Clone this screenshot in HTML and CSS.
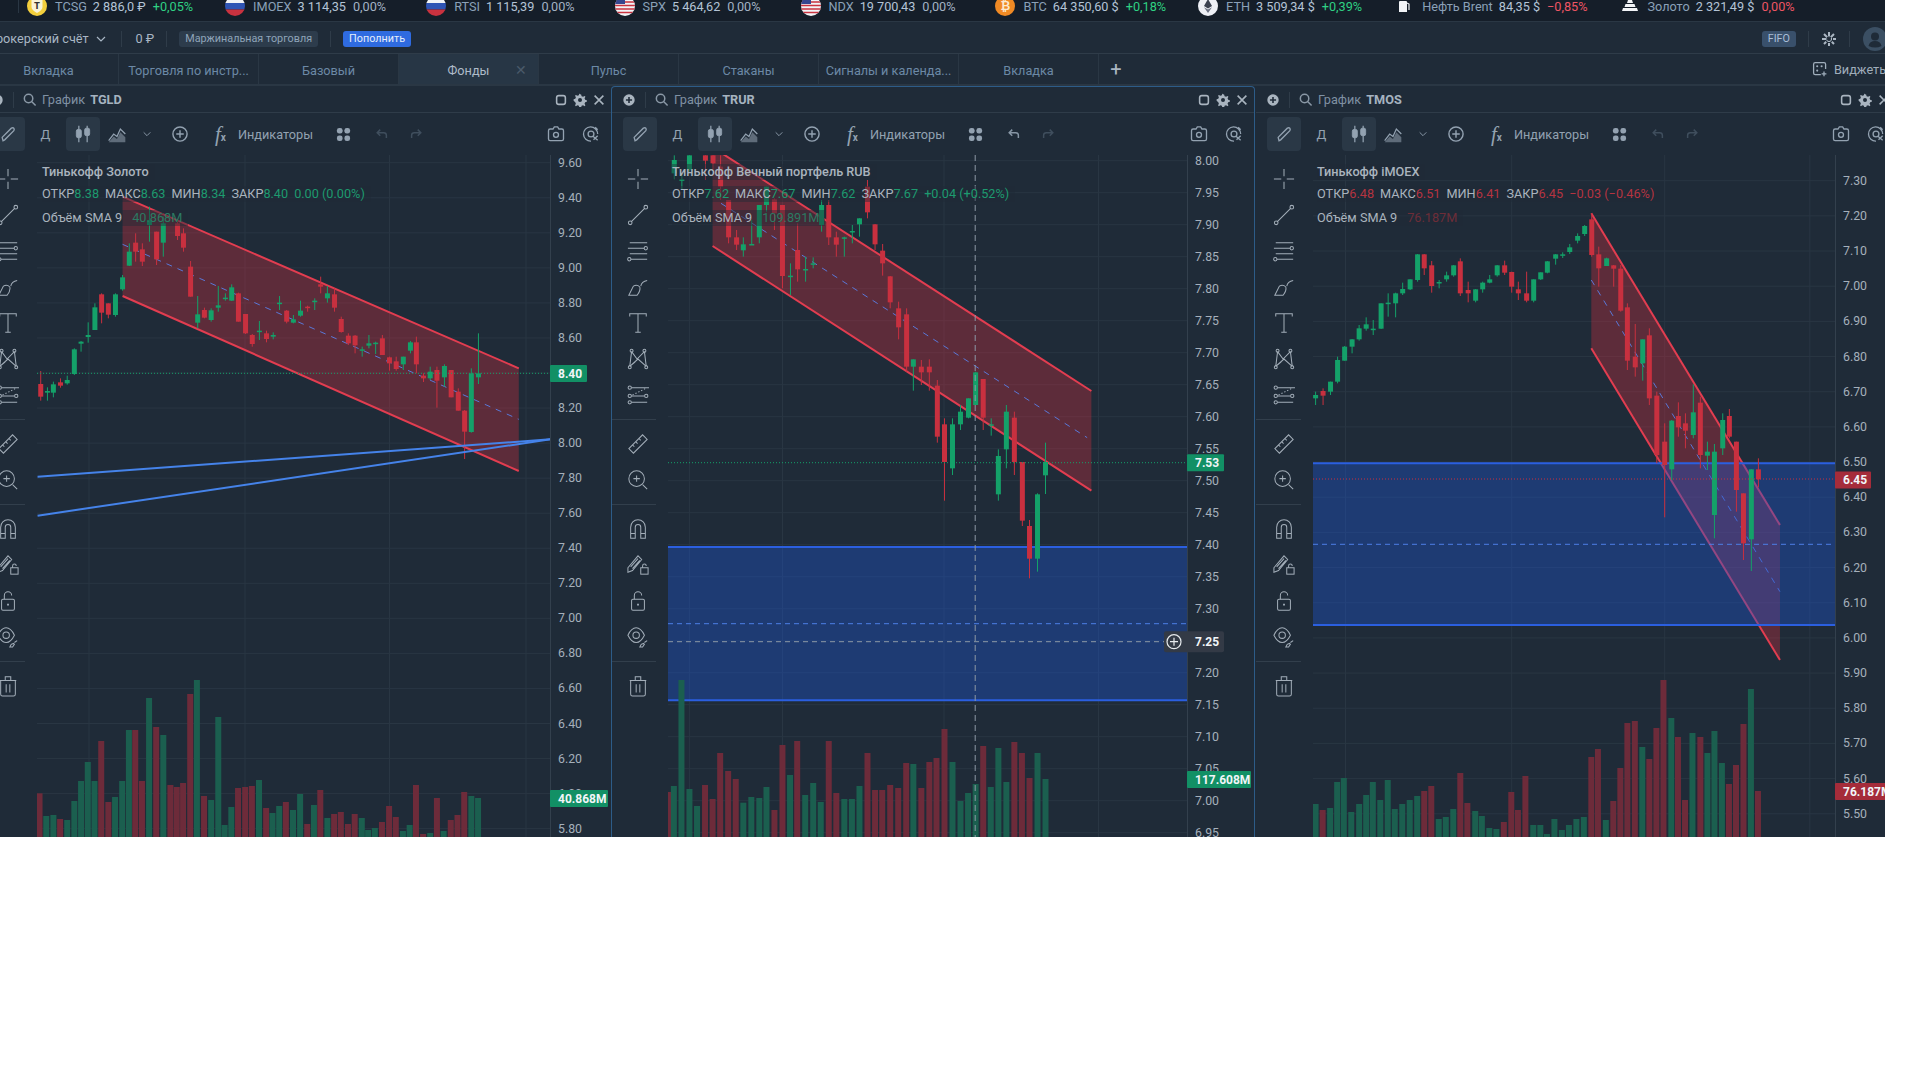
FILE: index.html
```html
<!DOCTYPE html>
<html lang="ru">

<head>
    <meta charset="UTF-8">
    <meta name="viewport" content="width=device-width, initial-scale=1.0">
    <title>Терминал</title>
    <link rel="stylesheet" href="styles.css">
</head>

<body>

    <!-- shared icons -->
    <svg class="icon-defs" xmlns="http://www.w3.org/2000/svg">
        <symbol id="flag-ru" viewBox="0 0 20 20"><rect width="20" height="7" fill="#f2f4f7"/><rect y="7" width="20" height="6.5" fill="#2f55b5"/><rect y="13.5" width="20" height="6.5" fill="#c9323f"/></symbol>
        <symbol id="flag-us" viewBox="0 0 20 20"><rect width="20" height="20" fill="#f2f4f7"/><path d="M0 9.5h20M0 13h20M0 16.500h20M0 6h20M0 2.500h20" stroke="#c9323f" stroke-width="1.7"/><rect width="10" height="8" fill="#35478f"/></symbol>
        <symbol id="logo-shield" viewBox="0 0 20 20"><path d="M4.500 3h11v8q0 3-5.500 6-5.500-3-5.500-6z" fill="#f8f3d8"/></symbol>
        <symbol id="logo-eth" viewBox="0 0 20 20"><rect width="20" height="20" fill="#eef0f6"/><path d="M10 3l4 7-4 2.400-4-2.400z" fill="#3b4150"/><path d="M6 11.200l4 2.400 4-2.400-4 5.800z" fill="#6c7283"/></symbol>
        <symbol id="logo-oil" viewBox="0 0 20 20"><path d="M6 5h6q1 0 1 1v10H5V6q0-1 1-1z" fill="#f2f4f7"/><path d="M13 7l2 1v6" stroke="#f2f4f7" stroke-width="1.200" fill="none"/></symbol>
        <symbol id="logo-gold" viewBox="0 0 20 20"><path d="M8 4h4l1 3H7zM5.500 8h9l1 3h-11zM3 12h14l1 3H2z" fill="#f2f4f7"/></symbol>

        <symbol id="i-plus" viewBox="0 0 16 16"><circle cx="8" cy="8" r="6.500" fill="currentColor"/><path d="M8 4.500v7M4.500 8h7" stroke="#1f2b38" stroke-width="1.800"/></symbol>
        <symbol id="i-search" viewBox="0 0 16 16"><circle cx="7" cy="7" r="4.500"/><path d="M10.500 10.500l4 4"/></symbol>
        <symbol id="i-square" viewBox="0 0 16 16"><rect x="3" y="3" width="10" height="10" rx="2.500" stroke-width="1.800"/></symbol>
        <symbol id="i-gear" viewBox="0 0 16 16"><path d="M8 1.500l1.300.300.500 1.900 1.700.700 1.700-1 1 1-1 1.700.700 1.700 1.900.500v1.800l-1.900.500-.700 1.700 1 1.700-1 1-1.700-1-1.700.700-.500 1.900H7.200l-.500-1.900-1.700-.700-1.700 1-1-1 1-1.700-.700-1.700L.700 8.900V7.100l1.900-.500.700-1.700-1-1.700 1-1 1.700 1 1.700-.700.500-1.900z" fill="currentColor" stroke="none"/><circle cx="8" cy="8" r="2.300" fill="#1f2b38" stroke="none"/></symbol>
        <symbol id="i-close" viewBox="0 0 16 16"><path d="M3 3l10 10M13 3L3 13" stroke-width="1.800"/></symbol>

        <symbol id="t-pencil" viewBox="0 0 24 24"><path d="M6 20l-1-4L16 5q2-1 3 0t0 3L8 19z" stroke-width="1.600"/></symbol>
        <symbol id="t-candles" viewBox="0 0 24 24"><path d="M7 2v20M17 2v20" stroke-width="1.500"/><rect x="4" y="6.500" width="6" height="10" rx="2" fill="currentColor"/><rect x="14" y="5" width="6" height="9" rx="2" fill="currentColor"/></symbol>
        <symbol id="t-area" viewBox="0 0 24 24"><path d="M2 20l6-8 4 3 4-9 6 6" stroke-width="1.500"/><path d="M2 22l6-7 4 3 4-8 6 6v6z" fill="currentColor" opacity=".55" stroke="none"/></symbol>
        <symbol id="t-chev" viewBox="0 0 12 12"><path d="M2 4l4 4 4-4" stroke-width="1.200"/></symbol>
        <symbol id="t-add" viewBox="0 0 24 24"><circle cx="12" cy="12" r="8.500" stroke-width="1.700"/><path d="M12 7.500v9M7.500 12h9" stroke-width="1.700"/></symbol>
        <symbol id="t-grid" viewBox="0 0 16 16"><rect x="1" y="1" width="6" height="6" rx="2.500" fill="currentColor" stroke="none"/><rect x="9" y="1" width="6" height="6" rx="2.500" fill="currentColor" stroke="none"/><rect x="1" y="9" width="6" height="6" rx="2.500" fill="currentColor" stroke="none"/><rect x="9" y="9" width="6" height="6" rx="2.500" fill="currentColor" stroke="none"/></symbol>
        <symbol id="t-undo" viewBox="0 0 16 16"><path d="M6 3L2.500 6.500 6 10M3 6.500h7q3 0 3 3v3" stroke-width="1.700"/></symbol>
        <symbol id="t-redo" viewBox="0 0 16 16"><path d="M10 3l3.500 3.500L10 10M13 6.500H6q-3 0-3 3v3" stroke-width="1.700"/></symbol>
        <symbol id="t-camera" viewBox="0 0 24 24"><path d="M8.500 6l1.500-2.500h4L15.500 6H19q2 0 2 2v10q0 2-2 2H5q-2 0-2-2V8q0-2 2-2z" stroke-width="1.600"/><circle cx="12" cy="13" r="3" stroke-width="1.600"/></symbol>
        <symbol id="t-alert" viewBox="0 0 24 24"><path d="M20 12a8.500 8.500 0 1 0-8 8.500M17 4l3 3" stroke-width="1.600"/><circle cx="12" cy="12" r="3.500" stroke-width="1.600"/><path d="M14 14.500l6 5M20 14l-5 5" stroke-width="1.600"/></symbol>

        <symbol id="d-cross" viewBox="0 0 24 24"><path d="M12 1v8M12 15v8M1 12h8M15 12h8"/></symbol>
        <symbol id="d-line" viewBox="0 0 24 24"><path d="M4.500 19.500l15-15"/><circle cx="20.500" cy="3.500" r="2"/><circle cx="3.500" cy="20.500" r="2"/></symbol>
        <symbol id="d-fib" viewBox="0 0 24 24"><path d="M3 3h19M1 9h18M3 15h19M4 21h18"/><circle cx="20.500" cy="9" r="1.800" fill="#1f2b38"/><circle cx="2.500" cy="21" r="1.800" fill="#1f2b38"/></symbol>
        <symbol id="d-brush" viewBox="0 0 24 24"><path d="M2 21l5-10q4-2 7 1 1 4-3 9zM15 11q1-5 7-6"/></symbol>
        <symbol id="d-text" viewBox="0 0 24 24"><path d="M3 5V2h18v3M12 2v20M9 22h6"/></symbol>
        <symbol id="d-pattern" viewBox="0 0 24 24"><path d="M5 4L3 20M5 4l6 8 8-8M19 4l2 16M3 20l9-8 9 8M3 20l6-5"/><circle cx="5" cy="3" r="1.600"/><circle cx="19" cy="3" r="1.600"/><circle cx="3" cy="21" r="1.600"/><circle cx="21" cy="21" r="1.600"/></symbol>
        <symbol id="d-forecast" viewBox="0 0 24 24"><path d="M5 4h19M5 20h17M5 13h14" /><path d="M6 12l14-7" stroke-dasharray="1.500 2"/><circle cx="3" cy="4" r="1.800"/><circle cx="3" cy="20" r="1.800"/><circle cx="21" cy="13" r="1.800"/><circle cx="3" cy="13" r="1.800"/></symbol>
        <symbol id="d-ruler" viewBox="0 0 24 24"><path d="M2 17L17 2l5 5L7 22zM6 13l2 2M9.500 9.500l2 2M13 6l2 2"/></symbol>
        <symbol id="d-zoom" viewBox="0 0 24 24"><circle cx="10.500" cy="10.500" r="8.500"/><path d="M10.500 7v7M7 10.500h7M17 17l5 5"/></symbol>
        <symbol id="d-magnet" viewBox="0 0 24 24"><path d="M4 22V10a8 8 0 0 1 16 0v12h-5V10a3 3 0 0 0-6 0v12zM4 17h5M15 17h5"/></symbol>
        <symbol id="d-lockpen" viewBox="0 0 24 24"><path d="M1 15L12 2l4 4L6 18l-5 2zM4 14l8-9M6 16l8-9"/><rect x="15" y="15" width="8" height="7"/><path d="M17 15v-2a2 2 0 0 1 4 0"/></symbol>
        <symbol id="d-lock" viewBox="0 0 24 24"><rect x="5" y="10" width="14" height="12" rx="1.500"/><path d="M8 10V6a4 4 0 0 1 8 0"/><path d="M12 15v2" stroke-width="2"/></symbol>
        <symbol id="d-eye" viewBox="0 0 24 24"><path d="M1 10q4-8 9-8t9 8q-4 8-9 8T1 10z"/><circle cx="10" cy="10" r="3.500"/><path d="M14 23l1.500-3 2.500-1 1 1-2 3zM19 18l3-2"/></symbol>
        <symbol id="d-trash" viewBox="0 0 24 24"><path d="M4 6h16v15q0 2-2 2H6q-2 0-2-2zM9 6V2h6v4M10 10v9M14 10v9M3 6h18"/></symbol>

        <symbol id="i-widgets" viewBox="0 0 20 20"><path d="M11 17H4q-2 0-2-2V4q0-2 2-2h11q2 0 2 2v6M15 13v6M12 16h6" stroke-width="1.600"/><circle cx="6.500" cy="6.500" r="1.300" fill="currentColor" stroke="none"/><circle cx="12" cy="6.500" r="1.300" fill="currentColor" stroke="none"/><circle cx="6.500" cy="12" r="1.300" fill="currentColor" stroke="none"/></symbol>
        <symbol id="i-snow" viewBox="0 0 16 16"><path d="M8 1v14M1 8h14M3 3l10 10M13 3L3 13" stroke-width="2" stroke-dasharray="4.500 1"/><circle cx="8" cy="8" r="2" fill="#1f2b38" stroke="none"/></symbol>
        <symbol id="i-user" viewBox="0 0 24 24"><circle cx="12" cy="12" r="12" fill="#3b4f63"/><circle cx="12" cy="9.500" r="4" fill="#1f2b38"/><path d="M5.500 19q1-5 6.500-5t6.500 5q-6 3-13 0z" fill="#1f2b38"/></symbol>
    </svg>

    <div class="app">

        <div class="ticker">
            <span class="ticker-dash"></span>
            <div class="tick"><span class="tick-logo logo-tcsg"><svg class="shield"><use href="#logo-shield"/></svg><b>T</b></span><span class="tick-name">TCSG</span><span class="tick-val">2 886,0 ₽</span><span class="tick-up">+0,05%</span></div>
            <div class="tick"><svg class="tick-icon"><use href="#flag-ru"/></svg><span class="tick-name">IMOEX</span><span class="tick-val">3 114,35</span><span class="tick-flat">0,00%</span></div>
            <div class="tick"><svg class="tick-icon"><use href="#flag-ru"/></svg><span class="tick-name">RTSI</span><span class="tick-val">1 115,39</span><span class="tick-flat">0,00%</span></div>
            <div class="tick"><svg class="tick-icon"><use href="#flag-us"/></svg><span class="tick-name">SPX</span><span class="tick-val">5 464,62</span><span class="tick-flat">0,00%</span></div>
            <div class="tick"><svg class="tick-icon"><use href="#flag-us"/></svg><span class="tick-name">NDX</span><span class="tick-val">19 700,43</span><span class="tick-flat">0,00%</span></div>
            <div class="tick"><span class="tick-logo logo-btc"><b>₿</b></span><span class="tick-name">BTC</span><span class="tick-val">64 350,60 $</span><span class="tick-up">+0,18%</span></div>
            <div class="tick"><svg class="tick-icon"><use href="#logo-eth"/></svg><span class="tick-name">ETH</span><span class="tick-val">3 509,34 $</span><span class="tick-up">+0,39%</span></div>
            <div class="tick"><svg class="tick-icon"><use href="#logo-oil"/></svg><span class="tick-name">Нефть Brent</span><span class="tick-val">84,35 $</span><span class="tick-down">−0,85%</span></div>
            <div class="tick"><svg class="tick-icon"><use href="#logo-gold"/></svg><span class="tick-name">Золото</span><span class="tick-val">2 321,49 $</span><span class="tick-down">0,00%</span></div>
        </div>

        <div class="account-bar">
            <span class="account-name">Брокерский счёт</span>
            <svg class="chev"><use href="#t-chev"/></svg>
            <span class="bar-sep"></span>
            <span class="account-sum">0 ₽</span>
            <span class="bar-sep"></span>
            <span class="chip">Маржинальная торговля</span>
            <span class="bar-sep"></span>
            <span class="chip chip-blue">Пополнить</span>
            <span class="chip chip-fifo">FIFO</span>
            <span class="bar-sep"></span>
            <svg class="snow-icon"><use href="#i-snow"/></svg>
            <span class="bar-sep"></span>
            <svg class="user-icon"><use href="#i-user"/></svg>
        </div>

        <div class="tabs">
            <div class="tab">Вкладка</div>
            <div class="tab">Торговля по инстр...</div>
            <div class="tab">Базовый</div>
            <div class="tab tab-active">Фонды<span class="tab-close">✕</span></div>
            <div class="tab">Пульс</div>
            <div class="tab">Стаканы</div>
            <div class="tab">Сигналы и календа...</div>
            <div class="tab">Вкладка</div>
            <div class="tab-add">+</div>
            <div class="widgets"><svg class="widgets-icon"><use href="#i-widgets"/></svg>Виджеты</div>
        </div>

        <div class="panels">

            <section class="panel panel-first">
                <div class="panel-head">
                    <svg class="head-plus"><use href="#i-plus"/></svg>
                    <span class="head-sep"></span>
                    <svg class="head-search"><use href="#i-search"/></svg>
                    <span class="head-label">График</span>
                    <span class="head-ticker">TGLD</span>
                    <svg class="head-btn head-btn-first"><use href="#i-square"/></svg>
                    <svg class="head-btn"><use href="#i-gear"/></svg>
                    <svg class="head-btn"><use href="#i-close"/></svg>
                </div>
                <div class="toolbar">
                    <span class="tool-chip"><svg class="bar-icon"><use href="#t-pencil"/></svg></span>
                    <span class="period">Д</span>
                    <span class="tool-chip candle-chip"><svg class="bar-icon"><use href="#t-candles"/></svg></span>
                    <svg class="bar-icon area-icon"><use href="#t-area"/></svg>
                    <svg class="chev-small"><use href="#t-chev"/></svg>
                    <svg class="bar-icon add-icon"><use href="#t-add"/></svg>
                    <span class="fx">f<small>x</small></span>
                    <span class="indicators">Индикаторы</span>
                    <svg class="grid-icon"><use href="#t-grid"/></svg>
                    <svg class="hist-icon hist-off"><use href="#t-undo"/></svg>
                    <svg class="hist-icon hist-off redo-icon"><use href="#t-redo"/></svg>
                    <svg class="bar-icon camera-icon"><use href="#t-camera"/></svg>
                    <svg class="bar-icon alert-icon"><use href="#t-alert"/></svg>
                </div>
                <div class="panel-body">
                    <div class="tools">
                        <svg class="tool"><use href="#d-cross"/></svg>
                        <svg class="tool"><use href="#d-line"/></svg>
                        <svg class="tool"><use href="#d-fib"/></svg>
                        <svg class="tool"><use href="#d-brush"/></svg>
                        <svg class="tool"><use href="#d-text"/></svg>
                        <svg class="tool"><use href="#d-pattern"/></svg>
                        <svg class="tool"><use href="#d-forecast"/></svg>
                        <span class="tool-sep"></span>
                        <svg class="tool"><use href="#d-ruler"/></svg>
                        <svg class="tool"><use href="#d-zoom"/></svg>
                        <span class="tool-sep"></span>
                        <svg class="tool"><use href="#d-magnet"/></svg>
                        <svg class="tool"><use href="#d-lockpen"/></svg>
                        <svg class="tool"><use href="#d-lock"/></svg>
                        <svg class="tool"><use href="#d-eye"/></svg>
                        <span class="tool-sep"></span>
                        <svg class="tool"><use href="#d-trash"/></svg>
                    </div>
                    <div class="chart" id="chart-tgld">
                        <div class="legend">
                            <div class="legend-title"><span>Тинькофф Золото</span></div>
                            <div class="legend-ohlc is-up"><span>ОТКР<b>8.38</b></span><span>МАКС<b>8.63</b></span><span>МИН<b>8.34</b></span><span>ЗАКР<b>8.40</b></span><span><b>0.00 (0.00%)</b></span></div>
                            <div class="legend-vol is-up"><span>Объём SMA 9<b>40.868M</b></span></div>
                        </div>
                    </div>
                </div>
            </section>

            <section class="panel panel-active">
                <div class="panel-head">
                    <svg class="head-plus"><use href="#i-plus"/></svg>
                    <span class="head-sep"></span>
                    <svg class="head-search"><use href="#i-search"/></svg>
                    <span class="head-label">График</span>
                    <span class="head-ticker">TRUR</span>
                    <svg class="head-btn head-btn-first"><use href="#i-square"/></svg>
                    <svg class="head-btn"><use href="#i-gear"/></svg>
                    <svg class="head-btn"><use href="#i-close"/></svg>
                </div>
                <div class="toolbar">
                    <span class="tool-chip"><svg class="bar-icon"><use href="#t-pencil"/></svg></span>
                    <span class="period">Д</span>
                    <span class="tool-chip candle-chip"><svg class="bar-icon"><use href="#t-candles"/></svg></span>
                    <svg class="bar-icon area-icon"><use href="#t-area"/></svg>
                    <svg class="chev-small"><use href="#t-chev"/></svg>
                    <svg class="bar-icon add-icon"><use href="#t-add"/></svg>
                    <span class="fx">f<small>x</small></span>
                    <span class="indicators">Индикаторы</span>
                    <svg class="grid-icon"><use href="#t-grid"/></svg>
                    <svg class="hist-icon"><use href="#t-undo"/></svg>
                    <svg class="hist-icon hist-off redo-icon"><use href="#t-redo"/></svg>
                    <svg class="bar-icon camera-icon"><use href="#t-camera"/></svg>
                    <svg class="bar-icon alert-icon"><use href="#t-alert"/></svg>
                </div>
                <div class="panel-body">
                    <div class="tools">
                        <svg class="tool"><use href="#d-cross"/></svg>
                        <svg class="tool"><use href="#d-line"/></svg>
                        <svg class="tool"><use href="#d-fib"/></svg>
                        <svg class="tool"><use href="#d-brush"/></svg>
                        <svg class="tool"><use href="#d-text"/></svg>
                        <svg class="tool"><use href="#d-pattern"/></svg>
                        <svg class="tool"><use href="#d-forecast"/></svg>
                        <span class="tool-sep"></span>
                        <svg class="tool"><use href="#d-ruler"/></svg>
                        <svg class="tool"><use href="#d-zoom"/></svg>
                        <span class="tool-sep"></span>
                        <svg class="tool"><use href="#d-magnet"/></svg>
                        <svg class="tool"><use href="#d-lockpen"/></svg>
                        <svg class="tool"><use href="#d-lock"/></svg>
                        <svg class="tool"><use href="#d-eye"/></svg>
                        <span class="tool-sep"></span>
                        <svg class="tool"><use href="#d-trash"/></svg>
                    </div>
                    <div class="chart" id="chart-trur">
                        <div class="legend">
                            <div class="legend-title"><span>Тинькофф Вечный портфель RUB</span></div>
                            <div class="legend-ohlc is-up"><span>ОТКР<b>7.62</b></span><span>МАКС<b>7.67</b></span><span>МИН<b>7.62</b></span><span>ЗАКР<b>7.67</b></span><span><b>+0.04 (+0.52%)</b></span></div>
                            <div class="legend-vol is-up"><span>Объём SMA 9<b>109.891M</b></span></div>
                        </div>
                    </div>
                </div>
            </section>

            <section class="panel panel-last">
                <div class="panel-head">
                    <svg class="head-plus"><use href="#i-plus"/></svg>
                    <span class="head-sep"></span>
                    <svg class="head-search"><use href="#i-search"/></svg>
                    <span class="head-label">График</span>
                    <span class="head-ticker">TMOS</span>
                    <svg class="head-btn head-btn-first"><use href="#i-square"/></svg>
                    <svg class="head-btn"><use href="#i-gear"/></svg>
                    <svg class="head-btn"><use href="#i-close"/></svg>
                </div>
                <div class="toolbar">
                    <span class="tool-chip"><svg class="bar-icon"><use href="#t-pencil"/></svg></span>
                    <span class="period">Д</span>
                    <span class="tool-chip candle-chip"><svg class="bar-icon"><use href="#t-candles"/></svg></span>
                    <svg class="bar-icon area-icon"><use href="#t-area"/></svg>
                    <svg class="chev-small"><use href="#t-chev"/></svg>
                    <svg class="bar-icon add-icon"><use href="#t-add"/></svg>
                    <span class="fx">f<small>x</small></span>
                    <span class="indicators">Индикаторы</span>
                    <svg class="grid-icon"><use href="#t-grid"/></svg>
                    <svg class="hist-icon hist-off"><use href="#t-undo"/></svg>
                    <svg class="hist-icon hist-off redo-icon"><use href="#t-redo"/></svg>
                    <svg class="bar-icon camera-icon"><use href="#t-camera"/></svg>
                    <svg class="bar-icon alert-icon"><use href="#t-alert"/></svg>
                </div>
                <div class="panel-body">
                    <div class="tools">
                        <svg class="tool"><use href="#d-cross"/></svg>
                        <svg class="tool"><use href="#d-line"/></svg>
                        <svg class="tool"><use href="#d-fib"/></svg>
                        <svg class="tool"><use href="#d-brush"/></svg>
                        <svg class="tool"><use href="#d-text"/></svg>
                        <svg class="tool"><use href="#d-pattern"/></svg>
                        <svg class="tool"><use href="#d-forecast"/></svg>
                        <span class="tool-sep"></span>
                        <svg class="tool"><use href="#d-ruler"/></svg>
                        <svg class="tool"><use href="#d-zoom"/></svg>
                        <span class="tool-sep"></span>
                        <svg class="tool"><use href="#d-magnet"/></svg>
                        <svg class="tool"><use href="#d-lockpen"/></svg>
                        <svg class="tool"><use href="#d-lock"/></svg>
                        <svg class="tool"><use href="#d-eye"/></svg>
                        <span class="tool-sep"></span>
                        <svg class="tool"><use href="#d-trash"/></svg>
                    </div>
                    <div class="chart" id="chart-tmos">
                        <div class="legend">
                            <div class="legend-title"><span>Тинькофф iMOEX</span></div>
                            <div class="legend-ohlc is-down"><span>ОТКР<b>6.48</b></span><span>МАКС<b>6.51</b></span><span>МИН<b>6.41</b></span><span>ЗАКР<b>6.45</b></span><span><b>−0.03 (−0.46%)</b></span></div>
                            <div class="legend-vol is-down"><span>Объём SMA 9<b>76.187M</b></span></div>
                        </div>
                    </div>
                </div>
            </section>

        </div>
    </div>

    <script src="charts.js"></script>

</body>

</html>
```

FILE: styles.css
```css
body {
    margin: 0;
    background-color: #fff;
    font-family: Roboto, "Noto Sans", sans-serif;
    font-size: 12.7px;
}

svg {
    display: block;
    flex-shrink: 0;
}

.icon-defs {
    position: absolute;
    width: 0;
    height: 0;
}

.app {
    width: 1885px;
    height: 837px;
    overflow: hidden;
    background-color: #1f2b38;
    color: #a9b4bf;
}

/* ticker line */
.ticker {
    display: flex;
    align-items: center;
    gap: 32px;
    height: 22px;
    padding-bottom: 9px;
    box-sizing: border-box;
    background-color: #151e29;
    border-bottom: 1px solid #2a3744;
    white-space: nowrap;
}

.ticker-dash {
    width: 19px;
    height: 13px;
    margin-right: -24px;
    border-right: 1px solid #2a3744;
    box-sizing: border-box;
}

.tick {
    display: flex;
    align-items: center;
}

.tick-icon,
.tick-logo {
    width: 20px;
    height: 20px;
    margin-right: 8px;
    border-radius: 50%;
}

.tick-logo {
    position: relative;
    flex-shrink: 0;
    display: flex;
    align-items: center;
    justify-content: center;
    overflow: hidden;
    font-family: "DejaVu Sans", sans-serif;
}

.logo-tcsg {
    background-color: #f3cf3d;
    color: #333;
    font-size: 8px;
}

.logo-tcsg b {
    position: relative;
}

.shield {
    position: absolute;
    top: 0;
    left: 0;
    width: 20px;
    height: 20px;
}

.logo-btc {
    background-color: #f08a24;
    color: #fbe9cf;
    font-size: 12px;
}

.tick-name {
    margin-right: 6px;
    color: #8ba1b8;
}

.tick-val {
    margin-right: 7px;
    color: #b4c4d6;
}

.tick-flat {
    margin-right: 8px;
    color: #a3b3c4;
}

.tick-up {
    color: #2fd183;
}

.tick-down {
    color: #ee5564;
}

/* account line */
.account-bar {
    display: flex;
    align-items: center;
    height: 32px;
    padding-top: 2px;
    border-bottom: 1px solid #2f3c49;
    box-sizing: border-box;
    white-space: nowrap;
}

.account-name {
    margin-left: -12px;
    color: #a8b6c4;
}

.chev {
    width: 12px;
    height: 12px;
    margin: 0 14px 0 6px;
    fill: none;
    stroke: #a8b6c4;
}

.bar-sep {
    width: 1px;
    height: 16px;
    background-color: #2f3c49;
}

.account-sum {
    margin: 0 12px 0 14px;
    color: #a8b6c4;
}

.chip {
    margin: 0 12px;
    padding: 0 6px;
    height: 16px;
    line-height: 16px;
    border-radius: 3px;
    background-color: #2d3c4c;
    color: #8fa4b9;
    font-size: 10.800px;
}

.chip-blue {
    background-color: #2f6be0;
    color: #e6eefb;
}

.chip-fifo {
    margin-left: auto;
    background-color: #39506b;
    color: #a9bed6;
}

.snow-icon {
    width: 16px;
    height: 16px;
    margin: 0 12px;
    fill: none;
    stroke: #aab6c2;
}

.user-icon {
    width: 24px;
    height: 24px;
    margin: 0 -2px 0 13px;
}

/* tabs */
.tabs {
    display: flex;
    align-items: stretch;
    height: 32px;
    margin-left: -21px;
    border-bottom: 2px solid #2a3744;
    box-sizing: border-box;
}

.tab {
    position: relative;
    width: 140px;
    flex-shrink: 0;
    box-sizing: border-box;
    border-right: 1px solid #2a3744;
    line-height: 33px;
    text-align: center;
    color: #6c89a6;
}

.tab-active {
    background-color: #273645;
    color: #aebbc8;
}

.tab-close {
    position: absolute;
    top: 0;
    right: 11px;
    font-size: 14px;
    color: #4a5a6a;
}

.tab-add {
    width: 34px;
    line-height: 30px;
    font-size: 20px;
    text-align: center;
    color: #aab6c2;
}

.widgets {
    display: flex;
    align-items: center;
    gap: 6px;
    margin-left: auto;
    transform: translateX(4px);
    color: #a0aebc;
    white-space: nowrap;
}

.widgets-icon {
    width: 16px;
    height: 16px;
    fill: none;
    stroke: #a0aebc;
}

/* chart panels */
.panels {
    display: flex;
    margin-left: -20px;
    height: 751px;
}

.panel {
    flex-shrink: 0;
    box-sizing: border-box;
    display: flex;
    flex-direction: column;
    padding-top: 1px;
}

.panel-first {
    width: 631px;
}

.panel-active {
    width: 644px;
    border: 1px solid #2d5c88;
    border-bottom: none;
    border-radius: 4px 4px 0 0;
    padding-top: 0;
}

.panel-last {
    width: 640px;
    margin-left: 1px;
}

.panel-head {
    display: flex;
    align-items: center;
    flex-shrink: 0;
    height: 25px;
    border-bottom: 1px solid #2f3c49;
    padding: 0 0 0 10px;
    color: #a9b4bf;
}

.head-plus {
    width: 14px;
    height: 14px;
    color: #a9b4bf;
}

.head-sep {
    width: 1px;
    height: 16px;
    margin: 0 8px 0 9px;
    background-color: #2f3c49;
}

.head-search {
    width: 15px;
    height: 15px;
    fill: none;
    stroke: #8a98a6;
    stroke-width: 1.6;
}

.head-label {
    margin: 0 5px 0 5px;
    color: #7f91a3;
}

.head-ticker {
    font-weight: 700;
    color: #a6b3c0;
}

.head-btn {
    width: 14px;
    height: 14px;
    margin-right: 5px;
    fill: none;
    stroke: #a9b4bf;
    color: #a9b4bf;
}

.head-btn-first {
    margin-left: auto;
}

.toolbar {
    display: flex;
    align-items: center;
    flex-shrink: 0;
    height: 42px;
    padding: 0 10px 0 11px;
    color: #93a2b1;
}

.tool-chip {
    display: flex;
    align-items: center;
    justify-content: center;
    width: 34px;
    height: 34px;
    border-radius: 4px;
    background-color: #2a3846;
}

.bar-icon {
    width: 20px;
    height: 20px;
    fill: none;
    stroke: #93a2b1;
    color: #93a2b1;
}

.period {
    width: 41px;
    font-size: 13px;
    text-align: center;
}

.area-icon {
    margin-left: 7px;
}

.chev-small {
    width: 10px;
    height: 10px;
    margin-left: 15px;
    fill: none;
    stroke: #8695a4;
}

.add-icon {
    margin-left: 18px;
}

.fx {
    margin-left: 25px;
    width: 23px;
    font-family: "Liberation Serif", serif;
    font-size: 21px;
    font-style: italic;
    color: #93a2b1;
}

.fx small {
    font-family: Roboto, sans-serif;
    font-size: 10px;
    font-style: normal;
    font-weight: 700;
}

.indicators {
    width: 73px;
    color: #93a2b1;
    white-space: nowrap;
}

.grid-icon {
    width: 15px;
    height: 15px;
    margin-left: 25px;
    color: #93a2b1;
}

.hist-icon {
    width: 14px;
    height: 14px;
    margin-left: 24px;
    fill: none;
    stroke: #8796a5;
}

.hist-off {
    stroke: #3f4e5d;
}

.redo-icon {
    margin-left: 20px;
}

.camera-icon {
    margin-left: auto;
}

.alert-icon {
    margin-left: 15px;
}

.panel-body {
    display: flex;
    flex: 1;
    min-height: 0;
}

.tools {
    flex-shrink: 0;
    width: 57px;
    box-sizing: border-box;
    padding-top: 6px;
}

.panel-active .tools {
    width: 56px;
}

.tool {
    width: 22px;
    height: 22px;
    padding: 7px 0;
    margin-left: 17px;
    fill: none;
    stroke: #a3aeb9;
    stroke-width: 1.1;
}

.panel-active .tool {
    margin-left: 15px;
}

.tool-sep {
    display: block;
    height: 1px;
    margin: 6px 12px 6px 0;
    background-color: #323f4c;
}

.chart {
    position: relative;
    flex: 1;
    overflow: hidden;
}

.chart-svg {
    position: absolute;
    top: 0;
    left: 0;
}

.axis-text {
    font-size: 12.300px;
    fill: #a5b0bb;
}

.tag-text {
    font-size: 12px;
    font-weight: 700;
    fill: #f1f5f8;
}

/* legend sits over the plot */
.legend {
    position: absolute;
    top: 6px;
    left: 5px;
    z-index: 2;
    color: #aab4be;
}

.panel-active .legend,
.panel-last .legend {
    left: 4px;
}

.legend > div {
    display: flex;
    height: 22px;
    align-items: center;
}

.legend > div > span {
    background-color: rgba(31, 43, 56, 0.45);
    padding-right: 6px;
    line-height: 16px;
    white-space: nowrap;
}

.legend-title {
    font-weight: 500;
}

.legend b {
    font-weight: 400;
}

.is-up b {
    color: #1d9a6f;
}

.is-down b {
    color: #b53441;
}

.legend-vol {
    margin-top: 2px;
}

.legend-vol b {
    margin-left: 10px;
}

.legend-vol.is-up b {
    color: #2c7a62;
}

.legend-vol.is-down b {
    color: #6d2d38;
}
```

FILE: charts.js
```js
// Chart data was read off the pictures of each panel, so x and y are in "trace" units:
// pageX = ox + x / sx, pageY = oy + y / 3. Candle: [x, up, wickTop, wickBottom, bodyTop, bodyBottom]. Volume: [x, up, top].
const NS = 'http://www.w3.org/2000/svg';
const PLOT_TOP = 155;
const GREEN = '#14a169', RED = '#c8303f';
const VOL_GREEN = '#1b5f4f', VOL_RED = '#6d2b3a';

const charts = [
    {
        id: 'chart-tgld', left: 37, plotW: 513, width: 574,
        ox: 0, oy: 160, sx: 2.529,
        labels: { first: 9.6, step: -0.2, y: 162.7, dy: 35.05, count: 20 },
        vgrid: [89, 245, 389.5, 526],
        channel: { up: [310, 110, 1312, 625], low: [310, 408, 1312, 933], mid: [310, 253, 1312, 778] },
        bluelines: [[95, 950, 1392, 838], [95, 1067, 1392, 838]],
        priceLine: { y: 373.3, color: GREEN },
        tags: [
            { text: '8.40', y: 373.5, w: 37, color: '#129065' },
            { text: '40.868M', y: 798.5, w: 58, color: '#129065' }
        ],
        candles: [
            [103,0,633,722,672,710],[120,1,682,722,693,698],[135,1,665,712,673,698],[153,0,655,683,667,677],[170,1,647,674,660,670],
            [188,1,565,645,568,642],[205,1,543,575,545,551],[223,1,487,548,525,531],[240,1,430,510,442,510],[257,0,400,490,403,458],
            [274,0,430,475,430,464],[292,1,400,470,403,465],[310,1,345,392,352,388],[327,1,250,318,275,317],[343,0,220,305,248,275],
            [360,0,250,318,268,305],[378,1,140,245,180,195],[396,0,215,315,215,298],[413,1,170,290,190,248],[449,0,180,240,190,228],
            [464,0,205,275,220,263],[482,0,303,410,320,410],[500,1,408,505,463,488],[517,0,443,475,450,473],[534,1,445,485,451,480],
            [552,1,378,455,436,443],[570,1,400,422,413,417],[586,1,373,423,382,422],[603,0,398,485,400,485],[621,0,462,522,462,520],
            [638,0,522,560,525,552],[656,1,483,540,512,515],[674,0,512,547,520,537],[691,1,517,538,525,530],[707,1,408,450,428,430],
            [725,0,450,490,452,485],[742,1,465,490,478,488],[760,1,422,470,452,467],[778,0,437,455,440,444],[796,1,415,450,422,425],
            [811,0,350,400,373,380],[828,1,378,428,400,415],[846,0,385,455,403,443],[863,0,470,518,477,516],[881,0,520,555,527,550],
            [898,0,525,580,527,556],[916,1,560,590,568,571],[933,1,525,565,550,557],[950,1,545,582,548,550],[967,0,525,585,535,585],
            [985,0,590,632,592,610],[1002,0,590,632,604,627],[1020,1,590,630,590,613],[1038,1,543,580,547,572],[1053,0,530,640,547,613],
            [1071,0,640,666,647,655],[1088,1,620,660,635,655],[1105,0,620,743,630,662],[1124,1,613,680,618,652],[1141,0,630,712,630,712],
            [1159,0,685,752,695,752],[1175,0,750,897,752,815],[1192,1,625,818,640,816],[1210,1,520,672,640,652]
        ],
        volumes: [
            [100,0,880],[117,1,948],[135,1,945],[152,0,957],[170,1,960],[188,1,903],[205,1,843],[222,1,786],[239,1,843],[256,0,723],
            [274,0,906],[291,1,891],[309,1,843],[326,1,690],[342,0,690],[359,0,843],[377,1,594],[395,0,681],[413,1,705],[431,0,855],
            [447,0,861],[463,0,849],[481,0,582],[498,1,540],[516,0,888],[534,1,900],[552,1,651],[568,1,975],[585,1,921],[602,0,864],
            [620,0,861],[637,0,858],[655,1,840],[673,0,924],[689,1,939],[706,1,918],[723,0,906],[741,1,930],[759,1,882],[777,0,972],
            [794,1,915],[810,0,870],[828,1,954],[845,0,942],[862,0,936],[880,0,972],[897,0,942],[915,1,954],[931,1,990],[948,1,984],
            [966,0,966],[984,0,918],[1001,0,951],[1019,1,993],[1036,1,975],[1052,0,855],[1070,0,1002],[1088,1,999],[1105,0,894],[1122,1,993],
            [1140,0,960],[1157,0,945],[1174,0,876],[1192,1,888],[1209,1,894]
        ]
    },
    {
        id: 'chart-trur', left: 668, plotW: 519, width: 586,
        ox: 620, oy: 140, sx: 2.376,
        labels: { first: 8, step: -0.05, y: 160.7, dy: 32, count: 22 },
        vgrid: [689.4, 782.5, 944, 1098.5],
        channel: { up: [220, 22, 1120, 753], low: [220, 318, 1120, 1052], mid: [240, 190, 1110, 893] },
        rect: { top: 547, bottom: 700.3, mid: 623.7 },
        priceLine: { y: 462.7, color: GREEN },
        tags: [
            { text: '7.53', y: 462.7, w: 37, color: '#129065' },
            { text: '117.608M', y: 779.5, w: 64, color: '#129065' }
        ],
        cross: { x: 975.2, y: 641.7, label: '7.25' },
        candles: [
            [129,1,46,118,60,100],[147,1,100,150,118,120],[165,1,46,95,46,90],[203,0,46,120,46,62],[221,0,46,90,46,70],
            [239,0,46,180,80,140],[258,0,180,310,180,292],[277,0,270,330,292,314],[293,1,292,350,313,331],[313,1,240,314,312,314],
            [331,1,195,310,195,292],[348,1,140,215,140,195],[367,0,175,270,178,220],[386,0,195,445,195,408],[405,1,370,465,407,410],
            [422,0,250,425,330,388],[441,1,350,425,387,389],[459,1,352,385,370,372],[479,1,180,275,195,255],[496,0,180,315,195,292],
            [514,0,275,350,292,314],[533,1,290,350,292,294],[552,1,255,310,273,275],[569,1,235,290,235,253],[588,0,120,235,140,217],
            [606,0,252,330,253,313],[624,0,312,407,332,370],[642,0,408,505,409,487],[662,0,485,598,505,562],[681,0,505,695,523,680],
            [697,1,658,752,658,680],[716,0,660,735,680,697],[735,0,658,752,680,697],[754,0,720,908,737,890],[771,0,835,1082,853,966],
            [790,1,835,1005,853,985],[809,1,795,870,815,853],[828,1,775,835,775,833],[845,1,695,795,697,795],[863,0,717,870,717,833],
            [882,1,835,887,853,855],[899,1,928,1082,948,1063],[918,1,795,985,815,928],[937,0,815,1005,833,966],[956,0,966,1158,966,1142],
            [973,0,1140,1315,1158,1256],[992,1,1060,1295,1063,1256],[1011,1,908,1062,966,1006]
        ],
        volumes: [
            [117,0,876],[128,1,858],[146,1,540],[165,1,867],[183,1,918],[202,0,855],[220,0,897],[238,0,759],[257,0,813],[275,0,837],
            [293,1,908],[312,1,891],[331,1,894],[348,1,861],[367,0,930],[386,0,735],[404,1,825],[421,0,723],[440,1,885],[459,1,849],
            [477,1,906],[496,0,723],[514,0,879],[533,1,897],[551,1,897],[569,1,858],[588,0,759],[606,0,870],[623,0,870],[642,0,855],
            [661,0,864],[680,0,789],[697,1,792],[716,0,864],[735,0,786],[752,0,774],[771,0,687],[790,1,786],[809,1,903],[827,1,879],
            [845,1,852],[863,0,738],[881,1,861],[899,1,744],[918,1,846],[937,0,726],[955,0,759],[973,0,834],[992,1,759],[1011,1,837]
        ]
    },
    {
        id: 'chart-tmos', left: 1313, plotW: 522, width: 583,
        ox: 1270, oy: 140, sx: 2.412,
        labels: { first: 7.3, step: -0.1, y: 180.7, dy: 35.17, count: 19 },
        vgrid: [1345.5, 1511.7, 1664.7, 1809.8],
        channel: { up: [775, 220, 1230, 1155], low: [775, 625, 1230, 1560], mid: [775, 420, 1230, 1355] },
        rect: { top: 463.3, bottom: 625, mid: 544.3 },
        priceLine: { y: 479, color: RED },
        tags: [
            { text: '6.45', y: 480, w: 36, color: '#a52c3a' },
            { text: '76.187M', y: 791.5, w: 58, color: '#a52c3a' }
        ],
        candles: [
            [110,1,755,795,765,775],[128,0,745,795,753,767],[146,1,725,765,725,755],[163,1,650,730,660,725],[180,1,618,662,620,662],
            [198,1,597,640,598,620],[215,1,555,602,565,598],[232,1,532,572,553,566],[249,1,540,585,566,568],[268,1,490,567,490,566],
            [285,1,460,530,488,490],[303,1,458,532,460,490],[320,1,428,465,447,460],[338,1,418,450,418,448],[356,1,342,425,343,420],
            [372,0,342,405,343,385],[390,0,363,458,376,438],[408,1,420,445,426,428],[426,1,395,425,406,418],[443,1,375,410,376,406],
            [459,0,355,468,364,460],[478,0,425,487,450,460],[496,1,447,487,448,482],[513,1,425,458,428,448],[530,1,405,430,418,428],
            [548,1,375,410,376,406],[566,0,362,405,376,398],[583,0,395,458,396,440],[599,0,425,480,448,460],[619,0,395,487,460,482],
            [636,1,418,487,418,482],[653,1,397,420,397,418],[669,1,363,400,364,398],[689,1,342,374,343,356],[706,1,337,354,343,345],
            [723,1,312,342,322,336],[742,1,280,310,288,302],[759,1,255,288,258,282],[776,0,220,350,238,345],[793,0,320,440,343,385],
            [812,1,353,378,355,378],[829,0,375,440,376,386],[846,0,375,515,386,512],[862,0,490,690,502,662],[881,0,552,710,650,682],
            [899,1,598,722,598,670],[915,0,565,795,586,775],[933,0,755,970,767,945],[952,0,850,1132,905,975],[969,1,840,1020,842,988],
            [985,0,787,890,828,862],[1002,0,820,925,850,872],[1021,1,733,895,817,885],[1038,0,770,985,788,945],[1055,1,905,990,935,947],
            [1072,1,912,1195,935,1125],[1092,1,820,945,840,925],[1108,0,807,895,828,890],[1125,0,905,1115,905,1050],[1142,0,1060,1260,1060,1210],
            [1161,1,988,1293,988,1198],[1178,0,955,1042,988,1018]
        ],
        volumes: [
            [110,1,912],[127,0,930],[145,1,924],[162,1,846],[178,1,834],[196,1,936],[215,1,912],[232,1,885],[248,1,846],[266,1,900],
            [284,1,840],[301,1,927],[319,1,912],[337,1,900],[355,1,888],[372,0,873],[389,0,858],[407,1,957],[424,1,951],[442,1,927],
            [459,0,819],[476,0,909],[495,1,933],[511,1,948],[529,1,984],[546,1,987],[564,0,966],[582,0,876],[598,0,930],[616,0,828],
            [635,1,975],[652,1,975],[668,1,1002],[686,1,957],[704,1,990],[721,1,975],[739,1,957],[757,1,951],[775,0,771],[791,0,747],
            [810,1,960],[828,0,903],[845,0,804],[862,0,669],[880,0,663],[898,1,741],[915,0,777],[932,0,684],[949,0,540],[968,1,654],
            [984,0,711],[1001,0,900],[1019,1,699],[1038,0,711],[1055,1,759],[1072,1,693],[1090,1,789],[1107,0,852],[1124,0,795],[1142,0,672],
            [1160,1,567],[1177,0,873]
        ]
    }
];

function add(parent, name, attrs, text) {
    const node = document.createElementNS(NS, name);
    for (const key in attrs) {
        node.setAttribute(key, attrs[key]);
    }
    if (text) {
        node.textContent = text;
    }
    parent.appendChild(node);
    return node;
}

function drawChart(c) {
    const box = document.getElementById(c.id);
    const height = 837 - PLOT_TOP;
    const svg = add(box, 'svg', { class: 'chart-svg', width: c.width, height: height });
    const X = v => c.ox + v / c.sx - c.left;
    const Y = v => c.oy + v / 3 - PLOT_TOP;
    const pageY = v => v - PLOT_TOP;
    const pageX = v => v - c.left;
    const plotW = c.plotW;

    // grid
    c.vgrid.forEach(x => add(svg, 'line', { x1: pageX(x), x2: pageX(x), y1: 0, y2: height, stroke: '#293643' }));
    const rows = [];
    for (let i = 0; i < c.labels.count; i++) {
        rows.push({ y: pageY(c.labels.y + i * c.labels.dy), text: (c.labels.first + i * c.labels.step).toFixed(2) });
    }
    rows.forEach(r => add(svg, 'line', { x1: 0, x2: plotW, y1: r.y, y2: r.y, stroke: '#293643' }));

    // regression channel goes below the blue box, the blue box tints it
    const ch = c.channel;
    add(svg, 'polygon', {
        points: [X(ch.up[0]), Y(ch.up[1]), X(ch.up[2]), Y(ch.up[3]), X(ch.low[2]), Y(ch.low[3]), X(ch.low[0]), Y(ch.low[1])].join(' '),
        fill: 'rgba(204, 48, 64, 0.36)'
    });
    [ch.up, ch.low].forEach(l => add(svg, 'line', { x1: X(l[0]), y1: Y(l[1]), x2: X(l[2]), y2: Y(l[3]), stroke: '#e23d50', 'stroke-width': 2 }));
    add(svg, 'line', { x1: X(ch.mid[0]), y1: Y(ch.mid[1]), x2: X(ch.mid[2]), y2: Y(ch.mid[3]), stroke: '#5a78d8', 'stroke-width': 1, 'stroke-dasharray': '6 6' });

    if (c.rect) {
        const top = pageY(c.rect.top), bottom = pageY(c.rect.bottom), mid = pageY(c.rect.mid);
        add(svg, 'rect', { x: 0, y: top, width: plotW, height: bottom - top, fill: 'rgba(31, 85, 205, 0.4)' });
        add(svg, 'line', { x1: 0, x2: plotW, y1: top, y2: top, stroke: '#2b5fe0', 'stroke-width': 2 });
        add(svg, 'line', { x1: 0, x2: plotW, y1: bottom, y2: bottom, stroke: '#2b5fe0', 'stroke-width': 2 });
        add(svg, 'line', { x1: 0, x2: plotW, y1: mid, y2: mid, stroke: '#4d7fe6', 'stroke-dasharray': '5 4' });
    }

    // volumes
    c.volumes.forEach(v => {
        const x = c.ox + v[0] / c.sx - c.left;
        const y = 500 + v[2] / 3 - PLOT_TOP;
        add(svg, 'rect', { x: Math.max(0, x - 3), y: y, width: x < 3 ? 3 + x : 6, height: height - y, fill: v[1] ? VOL_GREEN : VOL_RED });
    });

    // candles
    c.candles.forEach(k => {
        const x = X(k[0]);
        const color = k[1] ? GREEN : RED;
        add(svg, 'line', { x1: x, x2: x, y1: Y(k[2]), y2: Y(k[3]), stroke: color });
        add(svg, 'rect', { x: x - 2.5, y: Y(k[4]), width: 5, height: Math.max(1.5, Y(k[5]) - Y(k[4])), fill: color });
    });

    if (c.bluelines) {
        c.bluelines.forEach(l => add(svg, 'line', { x1: X(l[0]), y1: Y(l[1]), x2: X(l[2]), y2: Y(l[3]), stroke: '#4583ea', 'stroke-width': 2 }));
    }

    // last price line
    add(svg, 'line', { x1: 0, x2: plotW, y1: pageY(c.priceLine.y), y2: pageY(c.priceLine.y), stroke: c.priceLine.color, 'stroke-dasharray': '1 2' });

    // price axis
    add(svg, 'line', { x1: plotW + 0.5, x2: plotW + 0.5, y1: 0, y2: height, stroke: '#33404d' });
    rows.forEach(r => add(svg, 'text', { x: plotW + 8, y: r.y + 4, class: 'axis-text' }, r.text));

    c.tags.forEach(t => {
        const y = pageY(t.y);
        add(svg, 'rect', { x: plotW, y: y - 8.5, width: t.w, height: 17, rx: 1, fill: t.color });
        add(svg, 'text', { x: plotW + 8, y: y + 4, class: 'tag-text' }, t.text);
    });

    if (c.cross) {
        const cx = pageX(c.cross.x), cy = pageY(c.cross.y);
        add(svg, 'line', { x1: cx, x2: cx, y1: 0, y2: height, stroke: '#8d99a6', 'stroke-dasharray': '6 4' });
        add(svg, 'line', { x1: 0, x2: plotW - 23, y1: cy, y2: cy, stroke: '#8d99a6', 'stroke-dasharray': '5 4' });
        add(svg, 'rect', { x: plotW - 23, y: cy - 10.5, width: 60, height: 21, rx: 2, fill: '#333a46' });
        add(svg, 'circle', { cx: plotW - 13, cy: cy, r: 7, fill: 'none', stroke: '#e6eaee', 'stroke-width': 1.2 });
        add(svg, 'path', { d: `M${plotW - 13} ${cy - 4}v8M${plotW - 17} ${cy}h8`, stroke: '#e6eaee', 'stroke-width': 1.2 });
        add(svg, 'text', { x: plotW + 8, y: cy + 4, class: 'tag-text' }, c.cross.label);
    }
}

charts.forEach(drawChart);
```
